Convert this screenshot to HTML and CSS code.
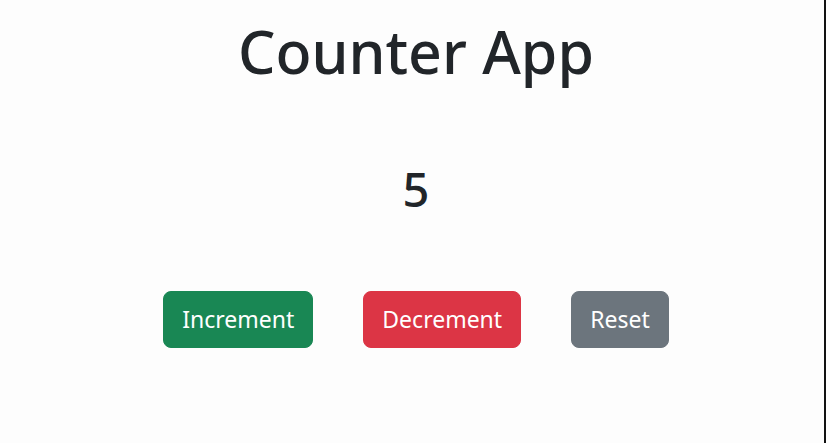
FILE: index.html
```html
<!DOCTYPE html>
<html lang="en">
<head>
<meta charset="utf-8">
<title>Counter App</title>
<link rel="stylesheet" href="styles.css">
</head>
<body>
<div class="frame">
  <main class="app">
    <h1 class="title">Counter App</h1>
    <h2 class="count">5</h2>
    <div class="actions">
      <button class="btn btn-success">Increment</button>
      <button class="btn btn-danger">Decrement</button>
      <button class="btn btn-secondary">Reset</button>
    </div>
  </main>
  <div class="edge"></div>
</div>
</body>
</html>
```
FILE: styles.css
```css
* { box-sizing: border-box; }
html, body { margin: 0; padding: 0; }
body {
  background: #fdfdfd;
  font-family: "Noto Sans", "Open Sans", sans-serif;
  color: #212529;
  width: 826px;
  height: 443px;
  overflow: hidden;
}
.frame {
  display: flex;
  height: 443px;
}
.app {
  flex: 1;
  display: flex;
  flex-direction: column;
  align-items: center;
  padding-left: 8px;
}
.edge {
  width: 2px;
  background: #121212;
}
.title {
  margin: 15px 0 0;
  font-size: 59px;
  font-weight: 500;
  line-height: 72px;
}
.count {
  margin: 74px 0 0;
  font-size: 47px;
  font-weight: 500;
  line-height: 57px;
}
.actions {
  display: flex;
  gap: 50px;
  margin-top: 73px;
}
.btn {
  font-family: inherit;
  font-size: 23px;
  line-height: 35px;
  padding: 10px 18px;
  border: 1px solid transparent;
  border-radius: 8px;
  color: #fff;
  cursor: pointer;
}
.btn-success { background: #198754; border-color: #198754; }
.btn-danger { background: #dc3545; border-color: #dc3545; }
.btn-secondary { background: #6c757d; border-color: #6c757d; }
```
